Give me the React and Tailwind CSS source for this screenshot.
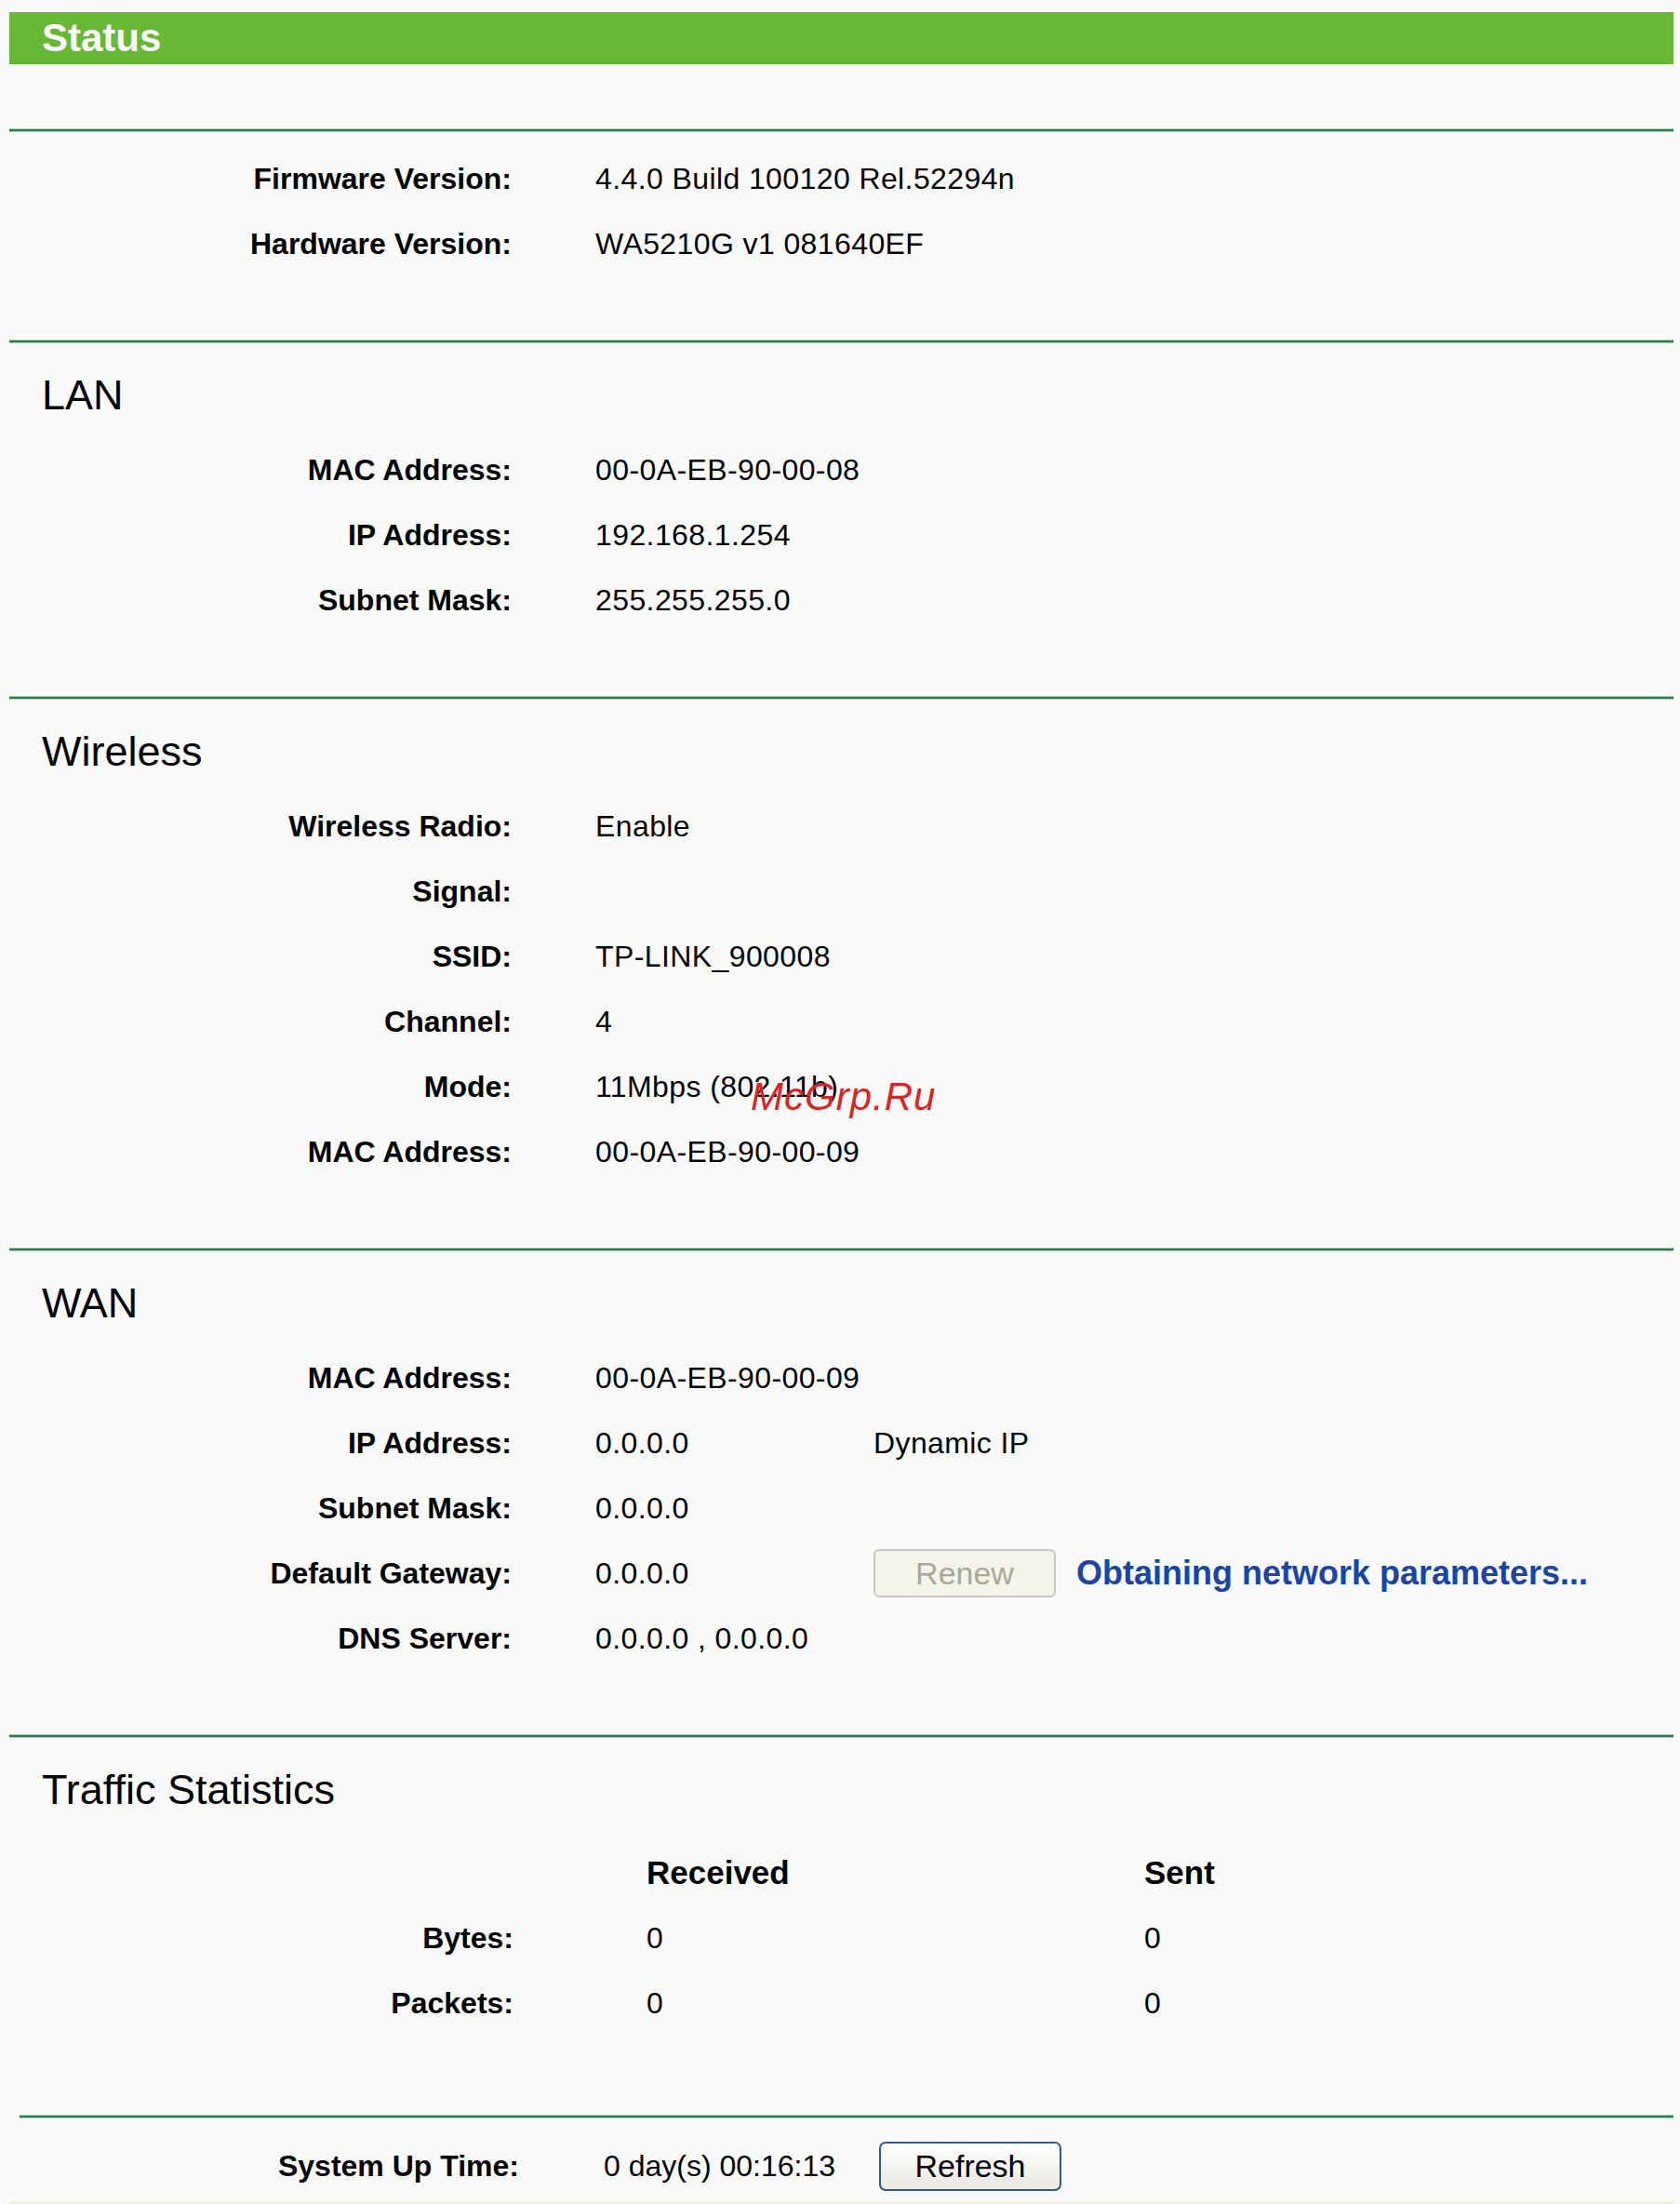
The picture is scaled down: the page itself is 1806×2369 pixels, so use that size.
import React from "react";

const FONT = { fontFamily: '"Liberation Sans", Arial, sans-serif' };

// green separator between sections
const Divider = ({ className = "" }) => (
  <div className={`h-[4px] border-y border-[#a9cfb5] bg-[#2a7c4e] ${className}`} />
);

const Heading = ({ children }) => (
  <div className="mt-[26px] mb-[15px] h-[60px] pl-[35px] text-[45px] leading-[60px] text-black">
    {children}
  </div>
);

const Row = ({ label, children }) => (
  <div className="flex h-[70px] items-center">
    <div className="w-[540px] shrink-0 text-right text-[32px] font-bold leading-[70px] text-black">
      {label}
    </div>
    <div className="ml-[90px] flex items-center text-[32px] leading-[70px] tracking-[0.4px] text-black">
      {children}
    </div>
  </div>
);

const lan = [
  ["MAC Address:", "00-0A-EB-90-00-08"],
  ["IP Address:", "192.168.1.254"],
  ["Subnet Mask:", "255.255.255.0"],
];

const wireless = [
  ["Wireless Radio:", "Enable"],
  ["Signal:", ""],
  ["SSID:", "TP-LINK_900008"],
  ["Channel:", "4"],
  ["Mode:", "11Mbps (802.11b)"],
  ["MAC Address:", "00-0A-EB-90-00-09"],
];

export default function App() {
  return (
    <div
      className="relative min-h-[2369px] w-full bg-[#fafafa] pt-[13px] pl-[10px] pr-[7px]"
      style={FONT}
    >
      {/* title bar */}
      <div className="flex h-[56px] items-center bg-[#67b835] pl-[35px]">
        <span className="text-[42px] font-bold leading-[56px] text-white">Status</span>
      </div>

      <Divider className="mt-[69px]" />
      <div className="pt-[15px] pb-[68px]">
        <Row label="Firmware Version:">4.4.0 Build 100120 Rel.52294n</Row>
        <Row label="Hardware Version:">WA5210G v1 081640EF</Row>
      </div>

      <Divider />
      <Heading>LAN</Heading>
      <div className="pb-[68px]">
        {lan.map(([l, v]) => (
          <Row key={l} label={l}>{v}</Row>
        ))}
      </div>

      <Divider />
      <Heading>Wireless</Heading>
      <div className="pb-[68px]">
        {wireless.map(([l, v]) => (
          <Row key={l} label={l}>{v}</Row>
        ))}
      </div>

      <Divider />
      <Heading>WAN</Heading>
      <div className="pb-[68px]">
        <Row label="MAC Address:">00-0A-EB-90-00-09</Row>
        <Row label="IP Address:">
          <span className="w-[299px]">0.0.0.0</span>
          <span>Dynamic IP</span>
        </Row>
        <Row label="Subnet Mask:">0.0.0.0</Row>
        <Row label="Default Gateway:">
          <span className="w-[299px]">0.0.0.0</span>
          <button
            disabled
            className="flex h-[52px] w-[196px] items-center justify-center rounded-[6px] border-2 border-[#cac8bb] bg-[#f5f4ea] text-[34px] leading-none tracking-normal text-[#aca899]"
          >
            Renew
          </button>
          <span className="ml-[22px] text-[36px] font-bold tracking-normal text-[#1a44a6]">
            Obtaining network parameters...
          </span>
        </Row>
        <Row label="DNS Server:">0.0.0.0 , 0.0.0.0</Row>
      </div>

      <Divider />
      <div className="mt-[26px] h-[60px] pl-[35px] text-[45px] leading-[60px] text-black">
        Traffic Statistics
      </div>
      <div className="mt-[24px] pb-[85px] text-black">
        <div className="flex h-[70px] items-center">
          <div className="w-[542px] shrink-0" />
          <div className="ml-[143px] w-[535px] text-[35px] font-bold leading-[70px]">Received</div>
          <div className="text-[35px] font-bold leading-[70px]">Sent</div>
        </div>
        {["Bytes:", "Packets:"].map((l) => (
          <div key={l} className="flex h-[70px] items-center">
            <div className="w-[542px] shrink-0 text-right text-[32px] font-bold leading-[70px]">{l}</div>
            <div className="ml-[143px] w-[535px] text-[32px] leading-[70px]">0</div>
            <div className="text-[32px] leading-[70px]">0</div>
          </div>
        ))}
      </div>

      <Divider className="ml-[11px]" />
      <div className="mt-[16px] flex h-[70px] items-center text-black">
        <div className="w-[548px] shrink-0 text-right text-[32px] font-bold leading-[70px]">
          System Up Time:
        </div>
        <div className="ml-[91px] w-[296px] text-[32px] leading-[70px]">0 day(s) 00:16:13</div>
        <button className="flex h-[53px] w-[196px] items-center justify-center rounded-[7px] border-2 border-[#2c5b96] bg-gradient-to-b from-white to-[#e9e8e2] text-[34px] leading-none text-black">
          Refresh
        </button>
      </div>
      <div className="mt-[3px] h-[6px] bg-[#f1efe2]" />

      {/* watermark over the page */}
      <div className="absolute left-[807px] top-[1158px] text-[42px] italic leading-none tracking-[1px] text-[#dd2222]">
        McGrp.Ru
      </div>
    </div>
  );
}
